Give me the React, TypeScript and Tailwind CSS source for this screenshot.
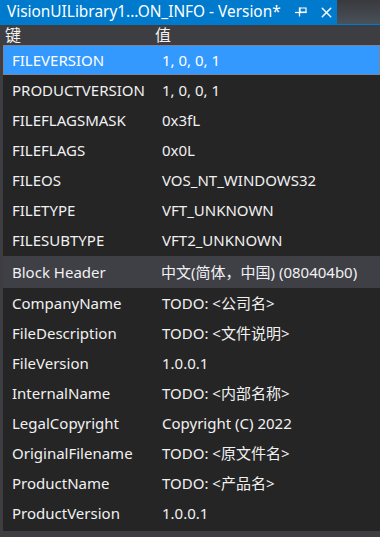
import { X } from 'lucide-react';

const fixedRows: [string, string][] = [
  ['FILEVERSION', '1, 0, 0, 1'],
  ['PRODUCTVERSION', '1, 0, 0, 1'],
  ['FILEFLAGSMASK', '0x3fL'],
  ['FILEFLAGS', '0x0L'],
  ['FILEOS', 'VOS_NT_WINDOWS32'],
  ['FILETYPE', 'VFT_UNKNOWN'],
  ['FILESUBTYPE', 'VFT2_UNKNOWN'],
];

const blockRows: [string, string][] = [
  ['CompanyName', 'TODO: <公司名>'],
  ['FileDescription', 'TODO: <文件说明>'],
  ['FileVersion', '1.0.0.1'],
  ['InternalName', 'TODO: <内部名称>'],
  ['LegalCopyright', 'Copyright (C) 2022'],
  ['OriginalFilename', 'TODO: <原文件名>'],
  ['ProductName', 'TODO: <产品名>'],
  ['ProductVersion', '1.0.0.1'],
];

const font = { fontFamily: '"Noto Sans", "Noto Sans CJK SC", sans-serif' };

function PinIcon() {
  // sideways pushpin, as in the VS tab
  return (
    <svg width="12" height="10" viewBox="0 0 12 10" className="text-white">
      <path d="M0 5.5h4" stroke="currentColor" strokeWidth="1.3" />
      <path d="M4.5 0.5v9" stroke="currentColor" strokeWidth="1.3" />
      <path d="M5 1h6v4.5H5z" fill="none" stroke="currentColor" strokeWidth="1.2" />
      <path d="M5 4.5h6.5v1.6H5z" fill="currentColor" />
    </svg>
  );
}

function Row({ k, v, selected }: { k: string; v: string; selected?: boolean }) {
  return (
    <div
      className={
        selected
          ? 'flex h-[30px] items-center bg-[#3399ff] text-white border border-dotted border-[#c0703a]'
          : 'flex h-[30px] items-center text-[#f1f1f1] border border-transparent'
      }
    >
      <div className="w-[158px] shrink-0 pl-[8px] whitespace-nowrap">{k}</div>
      <div className="whitespace-nowrap">{v}</div>
    </div>
  );
}

export default function App() {
  return (
    <div className="w-[380px] h-[537px] overflow-hidden bg-[#252526] flex flex-col text-[15px]" style={font}>
      {/* tab title */}
      <div className="flex h-[24px] shrink-0">
        <div className="w-[337px] bg-[#007acc] flex items-center text-white pl-[7px] text-[15.4px] leading-none">
          <span className="whitespace-nowrap">VisionUILibrary1...ON_INFO - Version*</span>
          <span className="ml-[14px] flex items-center">
            <PinIcon />
          </span>
          <X size={17} strokeWidth={2} className="ml-[11px] text-white" />
        </div>
        <div className="flex-1 bg-gradient-to-b from-[#3a3a3d] to-[#48515a]" />
      </div>
      <div className="h-[1px] bg-[#007acc] shrink-0" />

      <div className="flex-1 flex flex-col border-l-[3px] border-[#3e3e42]">
        {/* column header */}
        <div className="flex h-[20px] items-center bg-[#3e3e42] text-[#f1f1f1] text-[16px] shrink-0 -ml-[3px]">
          <div className="w-[155px] pl-[5px]">键</div>
          <div>值</div>
        </div>

        {fixedRows.map(([k, v], i) => (
          <Row key={k} k={k} v={v} selected={i === 0} />
        ))}

        <div className="flex h-[32px] items-center bg-[#3f3f46] text-[#f1f1f1] mt-[1px]">
          <div className="w-[158px] shrink-0 pl-[9px]">Block Header</div>
          <div className="whitespace-nowrap">中文(简体，中国) (080404b0)</div>
        </div>

        {blockRows.map(([k, v]) => (
          <Row key={k} k={k} v={v} />
        ))}

        <div className="flex-1" />
      </div>
      <div className="h-[6px] bg-[#3e3e42] shrink-0" />
    </div>
  );
}
